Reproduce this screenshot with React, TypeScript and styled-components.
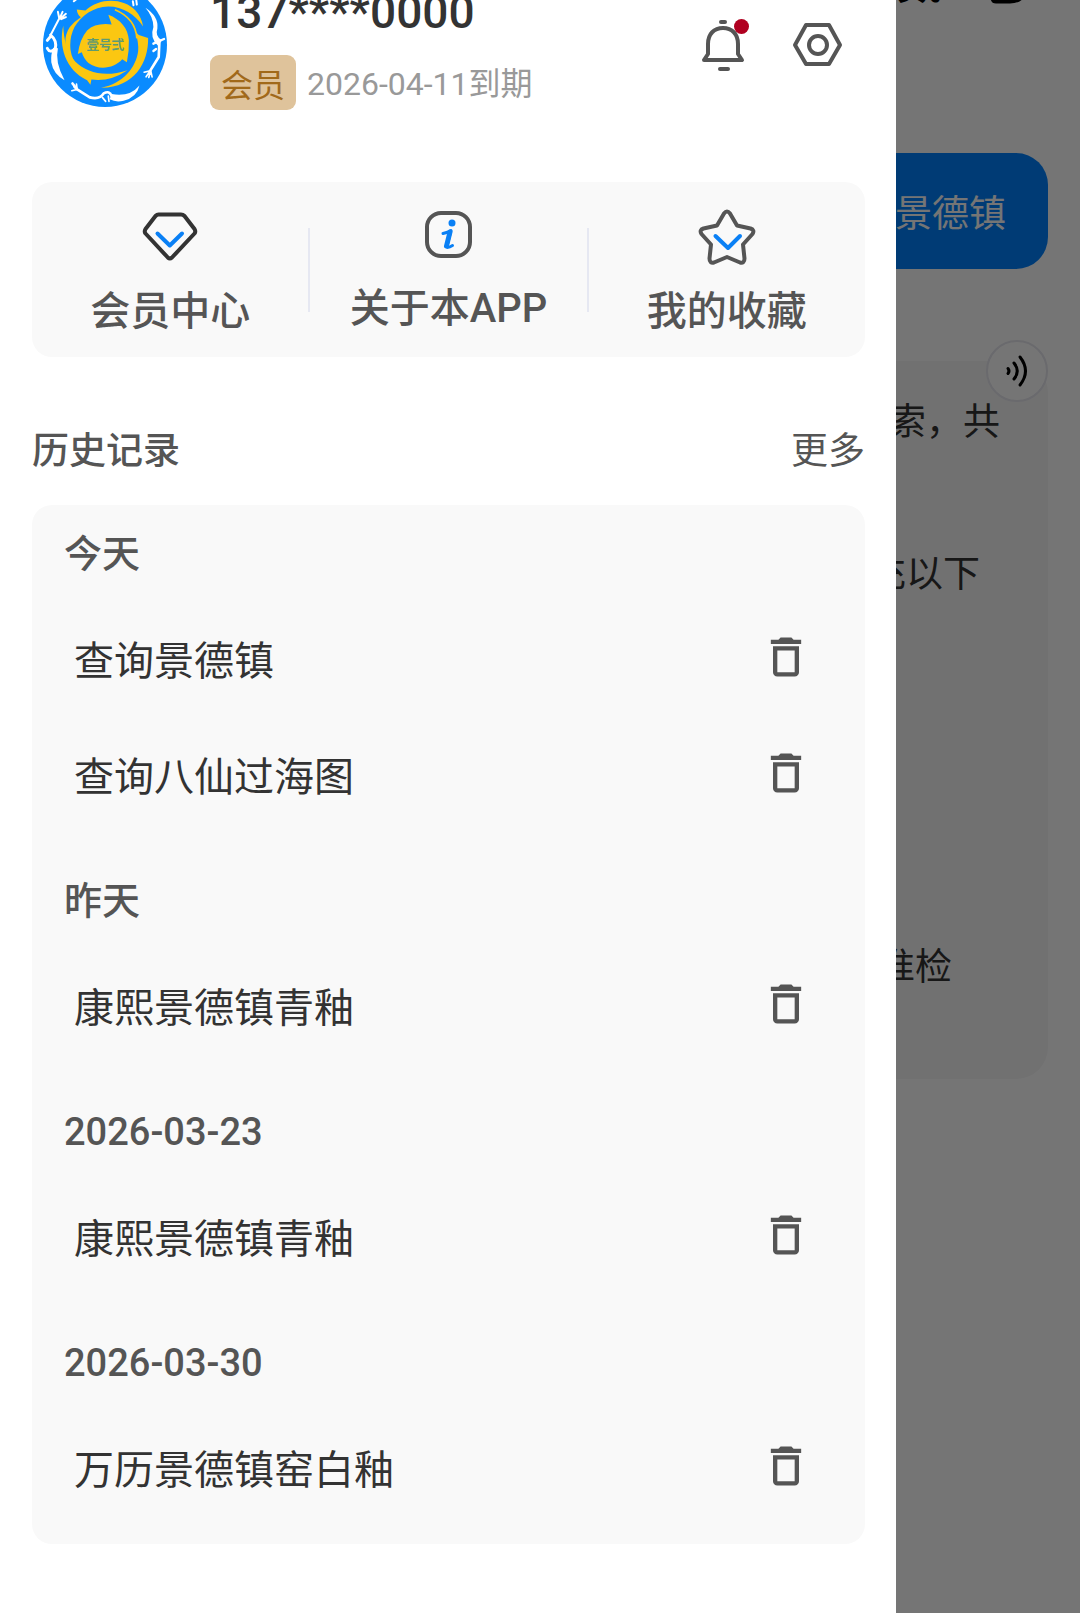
import React from 'react';
import styled, { createGlobalStyle } from 'styled-components';

const GlobalStyle = createGlobalStyle`
  * {
    box-sizing: border-box;
  }

  body {
    margin: 0;
    background: #ffffff;
    font-family: Roboto, 'Noto Sans CJK SC', sans-serif;
    color: #333333;
  }

  button {
    padding: 0;
    border: none;
    background: none;
    font: inherit;
    color: inherit;
    cursor: pointer;
  }

  h1, h2, h3, p, ul {
    margin: 0;
    padding: 0;
  }

  svg {
    display: block;
  }
`;

const Screen = styled.div`
  position: relative;
  min-height: 100vh;
  overflow: hidden;
`;

/* ---------- chat page under the drawer ---------- */

const ChatPage = styled.main`
  position: absolute;
  inset: 0;
  padding: 0 32px;
  display: flex;
  flex-direction: column;
  align-items: flex-end;
  font-size: 37px;
  line-height: 60px;
`;

const AppBar = styled.header`
  display: flex;
  align-items: center;
  gap: 46px;
  height: 60px;
  margin-top: -48px;
  padding-right: 20px;
  color: #000000;
`;

const AppTitle = styled.h1`
  font-size: 46px;
  line-height: 60px;
  font-weight: 500;
`;

const QuestionBubble = styled.p`
  margin-top: 141px;
  width: 60%;
  padding: 32px 42px 24px;
  border-radius: 32px;
  background: #0082ff;
  color: #ffffff;
  text-align: right;
`;

const AnswerCard = styled.section`
  position: relative;
  width: 100%;
  margin-top: 92px;
  padding: 32px 48px 81px;
  border-radius: 32px;
  background: #f6f6f7;
  text-align: right;
`;

const AnswerLine = styled.p<{ $top?: number; $end?: number }>`
  margin-top: ${({ $top }) => $top ?? 0}px;
  padding-right: ${({ $end }) => $end ?? 0}px;
`;

const SpeakButton = styled.button`
  position: absolute;
  top: -21px;
  right: 0;
  width: 62px;
  height: 62px;
  display: flex;
  align-items: center;
  justify-content: center;
  border: 2px solid #e6e6ee;
  border-radius: 50%;
  background: #ffffff;
  color: #000000;
`;

const Scrim = styled.div`
  position: absolute;
  inset: 0;
  background: rgba(0, 0, 0, 0.54);
`;

/* ---------- drawer ---------- */

const Drawer = styled.aside`
  position: relative;
  width: 83%;
  max-width: 896px;
  min-height: 100vh;
  padding: 0 31px 70px 32px;
  background: #ffffff;
`;

const ProfileHeader = styled.header`
  display: flex;
  align-items: center;
  height: 130px;
  margin-top: -20px;
  padding: 0 19px 0 11px;
`;

const ProfileInfo = styled.div`
  flex: 1;
  margin-left: 43px;
`;

const Phone = styled.h2`
  font-size: 46px;
  line-height: 64px;
  font-weight: 500;
`;

const MemberRow = styled.div`
  display: flex;
  align-items: center;
  gap: 11px;
  margin-top: 11px;
  font-size: 32px;
`;

const MemberTag = styled.span`
  padding: 8px 11px 0;
  border-radius: 9px;
  background: #dfc39b;
  color: #a1691a;
  line-height: 47px;
`;

const Expiry = styled.span`
  padding-top: 4px;
  color: #999999;
  line-height: 51px;
`;

const HeaderActions = styled.div`
  display: flex;
  gap: 38px;
  color: #555555;
`;

const IconButton = styled.button`
  position: relative;
  display: flex;
`;

const UnreadDot = styled.span`
  position: absolute;
  top: 2px;
  right: 3px;
  width: 15px;
  height: 15px;
  border-radius: 50%;
  background: #b00020;
`;

const Shortcuts = styled.nav`
  display: flex;
  margin-top: 72px;
  padding: 26px 0 15px;
  border-radius: 20px;
  background: #f9f9f9;
`;

const Shortcut = styled.button`
  flex: 1;
  display: flex;
  flex-direction: column;
  align-items: center;
  gap: 16px;
  color: #555555;
  font-size: 40px;
  line-height: 60px;
  font-weight: 500;
`;

const Divider = styled.span`
  width: 2px;
  height: 84px;
  margin-top: 20px;
  background: #e6e8f2;
`;

const HistoryHeader = styled.div`
  display: flex;
  justify-content: space-between;
  margin: 65px 0 23px;
  font-size: 37px;
  line-height: 60px;
  color: #555555;
`;

const HistoryTitle = styled.h2`
  font-size: 37px;
  font-weight: 500;
`;

const HistoryCard = styled.section`
  display: flex;
  flex-direction: column;
  gap: 40px;
  padding: 19px 53px 20px 32px;
  border-radius: 20px;
  background: #f9f9f9;
`;

const GroupTitle = styled.h3`
  margin-bottom: 15px;
  font-size: 38px;
  line-height: 60px;
  font-weight: 500;
  color: #555555;
`;

const HistoryList = styled.ul`
  list-style: none;
`;

const HistoryItem = styled.li`
  display: flex;
  align-items: center;
  justify-content: space-between;
  height: 116px;
  padding-left: 10px;
`;

const ItemLink = styled.a`
  padding-top: 10px;
  font-size: 40px;
  line-height: 60px;
  color: #333333;
  text-decoration: none;
`;

const DeleteButton = styled.button`
  display: flex;
  color: #555555;
`;

/* ---------- icons ---------- */

const Avatar = () => (
  <svg width="124" height="124" viewBox="129 -49 374 374" role="img" aria-label="头像">
    <circle cx="316" cy="138" r="187" fill="#0a8bff" />
    <g fill="#fbc711">
      {/* centre disc with its three notches */}
      <path d="M326 47C362 60 386 88 388 124Q389 158 382 190L368 181C344 208 298 216 266 192Q252 180 246 160L234 165Q240 120 262 94Q288 70 336 76Z" />
      {/* outer swirls */}
      <path d="M231 31L257 34C300-6 372-4 408 34Q426 54 431 82C406 46 370 22 326 22C280 24 246 48 224 84Q208 116 212 152Q216 182 236 204C196 182 184 120 210 84Q224 66 243 54Q232 46 231 31Z" />
      <path d="M418 108L446 117C448 190 404 268 304 267C372 254 410 204 416 156Q418 132 408 98Z" />
      <path d="M190 80C176 140 196 214 262 244L272 258L275 242Q330 250 384 214C320 236 262 224 226 188C200 158 192 122 190 80Z" />
    </g>
    <path d="M346 32Q408 58 412 118" fill="none" stroke="#fbc711" strokeWidth="5" />
    <g fill="none" stroke="#fff" strokeWidth="6" strokeLinecap="round" strokeLinejoin="round">
      <path d="M178 58L152 108M178 58L174 38M180 56L188 38M182 58L198 44M184 60L198 54" />
      <path d="M152 108Q172 124 166 150Q150 164 142 148M152 112L142 124" strokeWidth="9" />
      <path d="M218 254L232 272L270 296Q300 304 312 284Q330 274 336 292M480 130L478 174L452 216" strokeWidth="8" />
      <path d="M452 216L434 220M452 216L440 234M454 216L458 234M452 222L448 236" strokeWidth="5" />
      <path d="M232 272L216 276M232 272L230 256M230 272L222 264M308 296L318 308M326 292L328 308" strokeWidth="5" />
      <path d="M398-6L416-2M400 6L402 18M410 0L412 16M222 6Q238-8 250-10" strokeWidth="6" />
      <path d="M462 134L480 126L494 120M470 150L462 156" strokeWidth="7" />
    </g>
    <g fill="#fff">
      <path d="M160 146L174 148Q164 190 194 244Q160 226 154 190Q152 166 160 146Z" />
      <path d="M438 26Q478 52 474 88Q466 112 488 124L476 140Q450 118 462 84Q462 54 438 26Z" />
      <path d="M336 286Q390 296 420 260Q412 296 372 306Q350 312 330 302Z" />
    </g>
    <text
      x="317"
      y="149"
      textAnchor="middle"
      fontSize="38"
      fontWeight="700"
      fontFamily="'Noto Sans CJK SC', sans-serif"
      fill="#5f9a72"
    >
      壹号弍
    </text>
  </svg>
);

const BellIcon = () => (
  <svg width="56" height="56" viewBox="0 0 56 56" fill="none" stroke="currentColor" strokeWidth="4" strokeLinecap="round" strokeLinejoin="round">
    <path d="M25 5H29" />
    <path d="M12 37V27C12 17 18 11 27 11S42 17 42 27V37L46 43H8L12 37Z" />
    <path d="M24 52H32" />
  </svg>
);

const SettingsIcon = () => (
  <svg width="56" height="56" viewBox="0 0 56 56" fill="none" stroke="currentColor" strokeWidth="4" strokeLinejoin="round">
    <path d="M16 8H39L50 28L39 47H16L5 28Z" />
    <circle cx="28" cy="28" r="9" />
  </svg>
);

const DiamondIcon = () => (
  <svg width="58" height="58" viewBox="0 0 58 58" fill="none" strokeWidth="4" strokeLinecap="round" strokeLinejoin="round">
    <path d="M17.500 6.500H40Q42 6.500 43.500 8L53.500 21Q55 23.500 53.500 25.500L31 49.500Q28.800 51.500 26.800 49.500L4.500 25.500Q3 23.500 4.500 21L14.500 8Q16 6.500 17.500 6.500Z" stroke="#333333" />
    <path d="M16.500 25.500L28.800 37.500L41 25.500" stroke="#0a80f5" />
  </svg>
);

const InfoIcon = () => (
  <svg width="55" height="55" viewBox="0 0 55 55" fill="none">
    <rect x="6" y="5" width="43" height="43" rx="14" stroke="#555555" strokeWidth="4" />
    <circle cx="31" cy="15" r="3.500" fill="#0a80f5" />
    <path d="M22 25.500Q27 24.500 30 22.500L26 38Q25.500 41 31.500 37.500" stroke="#0a80f5" strokeWidth="3" strokeLinejoin="round" strokeLinecap="round" />
    <path d="M29 24L25.500 38" stroke="#0a80f5" strokeWidth="5" strokeLinecap="round" />
  </svg>
);

const StarIcon = () => (
  <svg width="58" height="58" viewBox="0 0 58 58" fill="none" strokeWidth="4" strokeLinecap="round" strokeLinejoin="round">
    <path d="M26 5.500Q29 1.500 32 5.500L39 17.500L52.500 20.500Q57 22 54.500 26L45 36.500L46.500 50.500Q46.500 55.500 42 54.500L29 49L16 54.500Q11.500 55.500 11.500 50.500L13 36.500L3.500 26Q1 22 5.500 20.500L19 17.500Z" stroke="#555555" />
    <path d="M17.500 28L30 40L42 28" stroke="#0a80f5" />
  </svg>
);

const TrashIcon = () => (
  <svg width="52" height="52" viewBox="0 0 24 24" fill="currentColor">
    <path d="M6 19c0 1.100.9 2 2 2h8c1.100 0 2-.9 2-2V7H6v12zM8 9h8v10H8V9zm7.500-5l-1-1h-5l-1 1H5v2h14V4z" />
  </svg>
);

const SoundIcon = () => (
  <svg width="32" height="36" viewBox="0 0 32 36" fill="none" stroke="currentColor" strokeWidth="3" strokeLinecap="round">
    <path d="M7 15.500Q9 18 7 20.500" />
    <path d="M13 10Q19.500 18 13 26" />
    <path d="M19 4Q30 18 19 32" />
  </svg>
);

const NewChatIcon = () => (
  <svg width="40" height="44" viewBox="0 0 40 44" fill="none" stroke="currentColor" strokeWidth="5" strokeLinejoin="round">
    <path d="M5 8H37V30Q34 41 22 41H8Q5 41 5 37Z" />
  </svg>
);

/* ---------- data ---------- */

const shortcuts = [
  { label: '会员中心', icon: <DiamondIcon /> },
  { label: '关于本APP', icon: <InfoIcon /> },
  { label: '我的收藏', icon: <StarIcon /> },
];

const historyGroups = [
  { title: '今天', items: ['查询景德镇', '查询八仙过海图'] },
  { title: '昨天', items: ['康熙景德镇青釉'] },
  { title: '2026-03-23', items: ['康熙景德镇青釉'] },
  { title: '2026-03-30', items: ['万历景德镇窑白釉'] },
];

const App: React.FC = () => {
  return (
    <>
      <GlobalStyle />
      <Screen>
        <ChatPage>
          <AppBar>
            <AppTitle>贰</AppTitle>
            <NewChatIcon />
          </AppBar>
          <QuestionBubble>景德镇</QuestionBubble>
          <AnswerCard>
            <SpeakButton aria-label="朗读">
              <SoundIcon />
            </SpeakButton>
            <AnswerLine>索，共</AnswerLine>
            <AnswerLine $top={92} $end={20}>充以下</AnswerLine>
            <AnswerLine $top={333} $end={48}>准检</AnswerLine>
          </AnswerCard>
        </ChatPage>
        <Scrim />

        <Drawer>
          <ProfileHeader>
            <Avatar />
            <ProfileInfo>
              <Phone>137****0000</Phone>
              <MemberRow>
                <MemberTag>会员</MemberTag>
                <Expiry>2026-04-11到期</Expiry>
              </MemberRow>
            </ProfileInfo>
            <HeaderActions>
              <IconButton aria-label="消息">
                <BellIcon />
                <UnreadDot />
              </IconButton>
              <IconButton aria-label="设置">
                <SettingsIcon />
              </IconButton>
            </HeaderActions>
          </ProfileHeader>

          <Shortcuts>
            {shortcuts.map(({ label, icon }, index) => (
              <React.Fragment key={label}>
                {index > 0 && <Divider />}
                <Shortcut>
                  {icon}
                  {label}
                </Shortcut>
              </React.Fragment>
            ))}
          </Shortcuts>

          <HistoryHeader>
            <HistoryTitle>历史记录</HistoryTitle>
            <button>更多</button>
          </HistoryHeader>

          <HistoryCard>
            {historyGroups.map((group) => (
              <div key={group.title}>
                <GroupTitle>{group.title}</GroupTitle>
                <HistoryList>
                  {group.items.map((item) => (
                    <HistoryItem key={item}>
                      <ItemLink href="#">{item}</ItemLink>
                      <DeleteButton aria-label={`删除 ${item}`}>
                        <TrashIcon />
                      </DeleteButton>
                    </HistoryItem>
                  ))}
                </HistoryList>
              </div>
            ))}
          </HistoryCard>
        </Drawer>
      </Screen>
    </>
  );
};

export default App;
